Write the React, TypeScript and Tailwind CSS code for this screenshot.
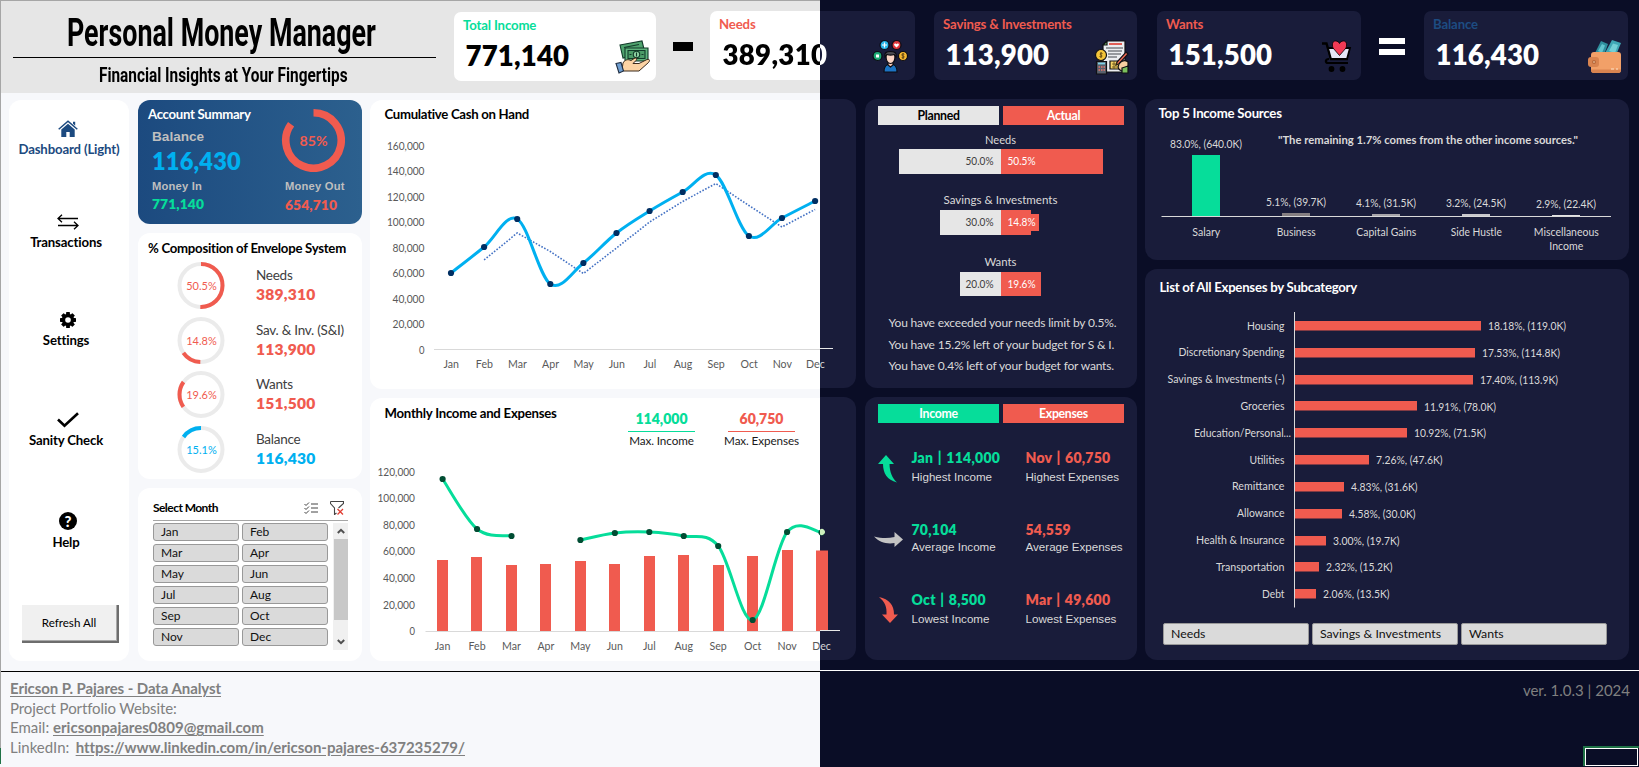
import React from 'react';

const MONTHS = ['Jan', 'Feb', 'Mar', 'Apr', 'May', 'Jun', 'Jul', 'Aug', 'Sep', 'Oct', 'Nov', 'Dec'];
const RED = '#f05b4f';
const GREEN = '#06dd9a';

type Pt = [number, number];

function smooth(pts: Pt[]) {
  let d = `M${pts[0][0]},${pts[0][1]}`;
  for (let i = 0; i < pts.length - 1; i++) {
    const a = pts[i - 1] ?? pts[i];
    const b = pts[i];
    const c = pts[i + 1];
    const e = pts[i + 2] ?? c;
    d += ` C${b[0] + (c[0] - a[0]) / 6},${b[1] + (c[1] - a[1]) / 6} ${c[0] - (e[0] - b[0]) / 6},${c[1] - (e[1] - b[1]) / 6} ${c[0]},${c[1]}`;
  }
  return d;
}

interface LabelProps {
  x: number;
  cy: number;
  w?: number;
  size?: number;
  fill?: string;
  bold?: boolean;
  anchor?: 'start' | 'middle' | 'end';
  children: string;
}

function Label({ x, cy, w, size = 10.6, fill = '#d9d9d9', bold, anchor = 'middle', children }: LabelProps) {
  return (
    <text
      x={x}
      y={cy + size * 0.36}
      fontSize={size}
      fontWeight={bold ? 700 : 400}
      fill={fill}
      textAnchor={anchor}
      textLength={w}
      lengthAdjust="spacingAndGlyphs"
    >
      {children}
    </text>
  );
}

/* ---------- icons ---------- */

function CashIcon() {
  return (
    <svg viewBox="0 0 36 34" className="h-[34px] w-9">
      <g stroke="#123b2a" strokeWidth="1.1">
        <path d="M5 5 27 1l3 12L8 18Z" fill="#4fa36e" />
        <path d="M9 7.500 24 4.500" fill="none" />
        <path d="M10 8h23v13H10Z" fill="#5fb37c" />
        <path d="M13 10.500h17v8H13Z" fill="#4c9c68" />
        <circle cx="21.500" cy="14.500" r="3.200" fill="#8ed0a2" />
        <path d="M21.500 12.500v4M14.500 14.500h2M26.500 14.500h2" fill="none" />
      </g>
      <path d="M8 23c2-3.500 5-4 8-2.500l4-2.500c2-.5 2 1.500 1 2.500l-3 3h6l8-4c3-.5 3 1 1.500 3L24 31H9l-2-1Z" fill="#fcd3a4" stroke="#3b2a1c" strokeWidth="1" />
      <path d="M1 23.500l5-1L8.500 31 4 33Z" fill="#6f9ed0" stroke="#1e2c40" strokeWidth="1.100" />
    </svg>
  );
}

function NeedsIcon() {
  return (
    <svg viewBox="0 0 36 34" className="h-[34px] w-9">
      <g stroke="#0b0b12" strokeWidth="1.200">
        <circle cx="12.500" cy="6" r="4.500" fill="#29b6e8" />
        <circle cx="24.500" cy="6" r="4.500" fill="#e0383c" />
        <circle cx="5.500" cy="17" r="4.500" fill="#19a974" />
        <circle cx="31" cy="17" r="4.500" fill="#f4b731" />
        <path d="M12 33c0-6 2-8 6.500-8s6.500 2 6.500 8Z" fill="#1c74c4" />
        <path d="M16 22h5v4l-2.500 2-2.500-2Z" fill="#f3c3b2" />
        <path d="M14 17c0 5 2 7.500 4.500 7.500S23 22 23 17v-2h-9Z" fill="#fbd5c5" />
        <path d="M13 18c-1-4 1-5.500 5.500-5.500S25 14 24 18c-1-1-1.500-2-2-2.500-2 .7-5 .7-7 0-.7.500-1 1.500-2 2.500Z" fill="#4a4a50" />
      </g>
      <path d="M12.500 3.500v5M10 6h5" stroke="#fff" strokeWidth="1.200" />
      <path d="M24.500 8.500 22 6c0-2 2-2 2.500-.8.5-1.200 2.500-1.200 2.500.8Z" fill="#fff" />
      <rect x="4" y="15.500" width="3" height="3" fill="#fff" />
      <path d="M32.300 15.300c-1.500-1-2.800 0-2.300 1s2 .6 2.200 1.500-1.200 1.500-2.500.7M31 14v6" stroke="#4c3510" strokeWidth=".9" fill="none" />
    </svg>
  );
}

function SavingsIcon() {
  return (
    <svg viewBox="0 0 36 36" className="h-9 w-9">
      <g stroke="#101014" strokeWidth="1.200">
        <path d="M9 6l4-4h18v31H9Z" fill="#eceef0" />
        <path d="M9 6l4-4v4Z" fill="#79c36b" />
        <path d="M16 22h12v8H16Z" fill="#f6d365" />
        <circle cx="7" cy="16" r="5.500" fill="#f4c53a" />
        <path d="M2.500 22.500h10V35h-10Z" fill="#59616d" />
        <path d="M32 13l2 2-9 10-3 1 1-3Z" fill="#ef6a55" />
        <path d="M25 25c3-4 6-4 9-2v7l-6 2c-3-1-5-3-3-7Z" fill="#f8cfa0" />
        <path d="M28 29l6-2v7h-6Z" fill="#7bc05d" />
      </g>
      <path d="M15 5h13" stroke="#e04f44" strokeWidth="1.800" />
      <path d="M12 9h17M14 12h14M14 15h13M14 18h9" stroke="#42464d" strokeWidth="1" />
      <path d="M7 13v6M8.500 14.500c-2-1-3.500.8-1.500 1.500s1 2.500-1.500 1.500" stroke="#5b4211" strokeWidth=".9" fill="none" />
      <path d="M4 24.500h7" stroke="#7fd3e6" strokeWidth="1.800" />
      <path d="M4.500 28h1.500M7 28h1.500M9.500 28H11M4.500 31h1.500M7 31h1.500M9.500 31H11" stroke="#e9776c" strokeWidth="1.500" />
      <path d="M18 25h7M18 28h6M20 22v8" stroke="#5c4a16" strokeWidth=".8" />
    </svg>
  );
}

function CartIcon() {
  return (
    <svg viewBox="0 0 30 34" className="h-[34px] w-[30px]">
      <path d="M0 4.500h4.500L9 20h17" stroke="#000" strokeWidth="2.400" fill="none" />
      <path d="M6 9h22l-3 11H9Z" fill="#e4e6f6" stroke="#000" strokeWidth="1.800" />
      <path d="M17.500 16.500 11 9c-1.500-4.500 0-7 2.500-7 2 0 3.300 1 4 2.500C18.200 3 19.500 2 21.500 2c2.500 0 4 2.500 2.500 7Z" fill="#f23a55" stroke="#000" strokeWidth=".8" />
      <path d="M26 24H6c-3 0-3-4 1-4" fill="none" stroke="#000" strokeWidth="2.200" />
      <circle cx="9.500" cy="30" r="2.900" />
      <circle cx="20.500" cy="30" r="2.900" />
    </svg>
  );
}

function WalletIcon() {
  return (
    <svg viewBox="0 0 36 35" className="h-[35px] w-9">
      <path d="m8 14 6-12 7 3-4 11Z" fill="#2f8f9e" />
      <path d="m18 14 7-13 9 3-5 12Z" fill="#3fa7b5" />
      <path d="m11 12 4-7 3 1.500L15 14Z" fill="#63c4cd" />
      <path d="m22 12 4-7.500 5 1.500-3 8Z" fill="#73cfd6" />
      <rect x="4" y="13" width="30" height="21" rx="3" fill="#f2a068" />
      <path d="M4 30.500h30v.5a3 3 0 0 1-3 3H7a3 3 0 0 1-3-3Z" fill="#d98450" />
      <rect x="1" y="18" width="11" height="10" rx="3" fill="#d98450" />
      <circle cx="7" cy="23" r="2" fill="#b8683a" />
      <circle cx="7" cy="23" r=".8" fill="#f7d9b8" />
      <path d="M24 30h3M29 30h2" stroke="#fde3c8" strokeWidth="1" />
    </svg>
  );
}

function HomeIcon() {
  return (
    <svg viewBox="0 0 20 17" className="h-[17px] w-5" fill="#1c4a80">
      <path d="M15 1.800h2.200v4L15 3.800Z" />
      <path d="m.7 9.300 9.300-8 9.300 8" fill="none" stroke="#1c4a80" strokeWidth="1.500" />
      <path d="M10 3.800 3.300 9.600V17h5v-5h3.400v5h5V9.600Z" />
    </svg>
  );
}

function SwapIcon() {
  return (
    <svg viewBox="0 0 22 16" className="h-4 w-[22px]" fill="none" stroke="#000" strokeWidth="1.300">
      <path d="M21 4.500H1M5 .8 1 4.500l4 3.700M1 11.500h20M17 7.800l4 3.700-4 3.700" />
    </svg>
  );
}

function GearIcon() {
  return (
    <svg viewBox="-8 -8 16 16" className="h-4 w-4">
      {[0, 45, 90, 135].map((a) => (
        <rect key={a} x="-1.900" y="-8" width="3.800" height="16" rx=".6" transform={`rotate(${a})`} />
      ))}
      <circle r="6.200" />
      <circle r="2.800" fill="#fff" />
    </svg>
  );
}

function CheckIcon() {
  return (
    <svg viewBox="0 0 22 16" className="h-4 w-[22px]" fill="none" stroke="#000" strokeWidth="2.600">
      <path d="m1 7.500 6.500 6.300L21 1.300" />
    </svg>
  );
}

function HelpIcon() {
  return (
    <span className="flex h-[18px] w-[18px] items-center justify-center rounded-full bg-black text-[15px] font-black leading-none text-white">
      ?
    </span>
  );
}

/* ---------- header ---------- */

interface StatProps {
  label: string;
  value: string;
  className: string;
  labelClass: string;
  valueClass: string;
  iconClass?: string;
  icon: React.ReactNode;
}

function Stat({ label, value, className, labelClass, valueClass, icon, iconClass = 'mr-[5px]' }: StatProps) {
  return (
    <div className={`relative flex h-[69px] shrink-0 justify-between rounded-[7px] pl-[9px] ${className}`}>
      <div className="relative flex flex-col">
        <span className={`mt-[4px] whitespace-nowrap text-[13.200px] font-bold leading-[18px] tracking-[-0.150px] ${labelClass}`}>{label}</span>
        <span className={`ml-[2.500px] mt-[4px] text-[27.600px] font-extrabold leading-[35px] tracking-[0.150px] ${valueClass}`}>{value}</span>
      </div>
      <div className={`relative mt-[28px] ${iconClass}`}>{icon}</div>
    </div>
  );
}

function Header() {
  return (
    <header className="flex h-[93px] items-start bg-[linear-gradient(90deg,#e6e6e6_820px,#0a0d26_820px)]">
      <div className="ml-[13px] mt-[11px] flex w-[423px] flex-col items-center font-['Roboto',sans-serif] font-bold text-black">
        <h1 className="flex h-[46px] w-full scale-x-[0.680] items-center justify-center whitespace-nowrap pb-[3px] pr-[9px] text-[39.500px] leading-[43px]">
          Personal Money Manager
        </h1>
        <div className="h-px w-full shrink-0 bg-black" />
        <p className="mt-[5px] scale-x-[0.750] whitespace-nowrap pr-[4px] text-[20.500px] leading-[24px]">
          Financial Insights at Your Fingertips
        </p>
      </div>
      <Stat label="Total Income" value="771,140" className="ml-[18px] mt-[12px] w-[202px] bg-white" labelClass="text-[#06dd9a]" valueClass="text-black" icon={<CashIcon />} />
      <div className="ml-[17px] mt-[42px] h-[9px] w-[20px] bg-black" />
      <Stat
        label="Needs"
        value="389,310"
        className="ml-[17px] mt-[11px] w-[205px] bg-[linear-gradient(90deg,#fff_110px,#191c3a_110px)]"
        labelClass="text-[#f05b4f]"
        valueClass="pl-[1px] bg-[linear-gradient(90deg,#000_98.500px,#fff_98.500px)] bg-clip-text text-transparent tracking-[0.300px]"
        iconClass="mr-[7px]"
        icon={<NeedsIcon />}
      />
      <Stat label="Savings & Investments" value="113,900" className="ml-[19px] mt-[11px] w-[203px] bg-[#191c3a]" labelClass="text-[#f05b4f]" valueClass="text-white" iconClass="mr-[7px]" icon={<SavingsIcon />} />
      <Stat label="Wants" value="151,500" className="ml-[20px] mt-[11px] w-[204px] bg-[#191c3a] pr-[4px]" labelClass="text-[#f05b4f]" valueClass="text-white" icon={<CartIcon />} />
      <div className="ml-[18px] mt-[38px] flex h-[17px] w-[26px] flex-col justify-between">
        <div className="h-[6px] bg-white" />
        <div className="h-[6px] bg-white" />
      </div>
      <Stat label="Balance" value="116,430" className="ml-[19px] mt-[11px] w-[204px] bg-[#191c3a]" labelClass="text-[#1d4c82]" valueClass="text-white" icon={<WalletIcon />} />
    </header>
  );
}

/* ---------- left columns ---------- */

function NavItem({ icon, label, className = '', labelClass = 'pr-[4px]' }: { icon: React.ReactNode; label: string; className?: string; labelClass?: string }) {
  return (
    <div className={`flex flex-col items-center ${className}`}>
      <div className="flex h-[18px] items-end">{icon}</div>
      <span className={`mt-[3px] whitespace-nowrap text-[13.200px] font-bold leading-[18px] tracking-[-0.150px] ${labelClass}`}>{label}</span>
    </div>
  );
}

function Sidebar() {
  return (
    <nav className="flex h-[561px] w-[120px] flex-col items-center rounded-[12px] bg-white pr-[2px] text-black">
      <NavItem icon={<HomeIcon />} label="Dashboard (Light)" className="mt-[19px] text-[#1c4a80]" labelClass="pl-[2px]" />
      <NavItem icon={<SwapIcon />} label="Transactions" className="mt-[54px]" />
      <NavItem icon={<GearIcon />} label="Settings" className="mt-[59px]" />
      <NavItem icon={<CheckIcon />} label="Sanity Check" className="mt-[61px]" />
      <NavItem icon={<HelpIcon />} label="Help" className="mt-[63px]" />
      <button className="ml-[4px] mt-[54px] h-[38px] w-[97px] border-b-2 border-r-2 border-[#6d6d6d] bg-[#f0f0f0] text-[11.600px] shadow-[inset_-1px_-1px_0_#a8a8a8]">
        Refresh All
      </button>
    </nav>
  );
}

function arc(cx: number, cy: number, r: number, from: number, to: number) {
  const p = (f: number) => {
    const t = f * 2 * Math.PI;
    return `${cx + r * Math.sin(t)},${cy - r * Math.cos(t)}`;
  };
  return `M${p(from)} A${r},${r} 0 ${to - from > 0.5 ? 1 : 0} 1 ${p(to)}`;
}

function AccountSummary() {
  return (
    <section className="flex h-[124px] w-[224px] justify-between rounded-[12px] bg-[linear-gradient(90deg,#1c4a7f,#2c608e)]">
      <div className="flex flex-col pl-[14px]">
        <h2 className="-ml-[4px] mt-[5px] whitespace-nowrap text-[13.200px] font-bold leading-[18px] tracking-[-0.300px] text-white">Account Summary</h2>
        <span className="mt-[6px] font-['Liberation_Sans',sans-serif] text-[13.600px] font-bold leading-[16px] text-[#bfbfbf]">Balance</span>
        <span className="mt-[2px] text-[23.600px] font-extrabold leading-[28px] tracking-[0.150px] text-[#00b0f0]">116,430</span>
        <span className="mt-[4px] font-['Liberation_Sans',sans-serif] text-[11.200px] font-bold leading-[14px] tracking-[0.200px] text-[#bfbfbf]">Money In</span>
        <span className="mt-[3px] text-[13.800px] font-extrabold leading-[16px] tracking-[0.100px] text-[#06dd9a]">771,140</span>
      </div>
      <div className="mr-[16px] mt-[8px] flex w-[61px] flex-col">
        <svg viewBox="0 0 64 64" className="-ml-[4px] h-16 w-16 shrink-0">
          <path d={arc(32.5, 32.5, 27.7, 0, 0.85)} fill="none" stroke={RED} strokeWidth="7.600" />
          <Label x={32.500} cy={32.700} w={28} size={14} bold fill={RED}>85%</Label>
        </svg>
        <span className="mt-[7px] whitespace-nowrap font-['Liberation_Sans',sans-serif] text-[11.200px] font-bold leading-[14px] tracking-[0.200px] text-[#bfbfbf]">Money Out</span>
        <span className="mt-[4px] text-[13.800px] font-extrabold leading-[16px] tracking-[0.100px] text-[#f05b4f]">654,710</span>
      </div>
    </section>
  );
}

const ENVELOPES = [
  { name: 'Needs', value: '389,310', pct: '50.5%', from: 0, to: 0.505, color: RED, cls: 'text-[#f05b4f]' },
  { name: 'Sav. & Inv. (S&I)', value: '113,900', pct: '14.8%', from: 0.505, to: 0.653, color: RED, cls: 'text-[#f05b4f]' },
  { name: 'Wants', value: '151,500', pct: '19.6%', from: 0.653, to: 0.849, color: RED, cls: 'text-[#f05b4f]' },
  { name: 'Balance', value: '116,430', pct: '15.1%', from: 0.849, to: 1, color: '#00b0f0', cls: 'text-[#00b0f0]' },
];

function Composition() {
  return (
    <section className="mt-[9px] flex h-[246px] w-[224px] flex-col rounded-[12px] bg-white">
      <h2 className="ml-[10px] mt-[6px] whitespace-nowrap text-[13.200px] font-bold leading-[18px] tracking-[-0.270px] text-black">% Composition of Envelope System</h2>
      <div className="mt-[1px] flex flex-col">
        {ENVELOPES.map((e) => (
          <div key={e.name} className="flex h-[54.500px] items-center">
            <svg viewBox="0 0 48 48" className="ml-[38.500px] h-12 w-12">
              <circle cx="24" cy="24.500" r="21.500" fill="none" stroke="#ebebeb" strokeWidth="4" />
              <path d={arc(24, 24.5, 21.5, e.from, e.to)} fill="none" stroke={e.color} strokeWidth="4" />
              <Label x={24.500} cy={24.500} w={30.500} size={12} fill={e.color}>{e.pct}</Label>
            </svg>
            <div className="ml-[31.500px] flex flex-col">
              <span className="whitespace-nowrap text-[13.500px] leading-[18px] tracking-[-0.250px] text-[#404040]">{e.name}</span>
              <span className={`mt-[1px] text-[15.600px] font-extrabold leading-[19px] tracking-[0.200px] ${e.cls}`}>{e.value}</span>
            </div>
          </div>
        ))}
      </div>
    </section>
  );
}

function MonthSlicer() {
  return (
    <section className="mt-[9px] flex h-[173px] w-[224px] flex-col rounded-[12px] bg-white px-[14px] pl-[15px]">
      <div className="mt-[10px] flex h-[23px] items-center justify-between border-b border-[#a6a6a6] pb-[2px]">
        <h2 className="text-[12px] font-bold tracking-[-0.550px] text-black">Select Month</h2>
        <div className="flex items-center gap-[12px] pr-[4px]">
          <svg viewBox="0 0 14 12" className="h-3 w-[14px]" fill="none" stroke="#444" strokeWidth="1">
            <path d="m.5 2 1.500 1.500L5 .5M.5 6 2 7.500l3-3M.5 10 2 11.500l3-3M7 2h7M7 6h7M7 10h7" />
          </svg>
          <svg viewBox="0 0 14 14" className="h-[14px] w-[14px]" fill="none" stroke="#444" strokeWidth="1.100">
            <path d="M.5.500h13v2L8.500 7M.5.500v2l4 4.500v6.500l2-1.500" />
            <path d="m7.500 8 5.500 5.500M13 8l-5.500 5.500" stroke="#e03c31" strokeWidth="1.300" />
          </svg>
        </div>
      </div>
      <div className="mt-[2px] flex items-start justify-between">
        <div className="grid grid-cols-2 gap-[3px]">
          {MONTHS.map((m) => (
            <button key={m} className="flex h-[18px] w-[86px] items-center rounded-[3px] border border-[#999] bg-[#dadada] pl-[7px] text-[12px] leading-none text-[#111]">
              {m}
            </button>
          ))}
        </div>
        <div className="flex h-[127px] w-[15px] flex-col items-center bg-[#f0f0f0] pb-[5px] pt-[5px]">
          <svg viewBox="0 0 8 6" className="h-[6px] w-2 shrink-0" fill="none" stroke="#505050" strokeWidth="2">
            <path d="m.8 5 3.200-3.200L7.200 5" />
          </svg>
          <div className="mt-[5px] h-[81px] w-[14px] shrink-0 bg-[#c8c8c8]" />
          <svg viewBox="0 0 8 6" className="mt-auto h-[6px] w-2 shrink-0" fill="none" stroke="#505050" strokeWidth="2">
            <path d="m.8 1 3.200 3.200L7.200 1" />
          </svg>
        </div>
      </div>
    </section>
  );
}

/* ---------- middle charts ---------- */

function SplitCard({ heightClass, children }: { heightClass: string; children: React.ReactNode }) {
  return (
    <section className={`relative flex w-[486px] flex-col ${heightClass}`}>
      <div className="absolute inset-y-0 left-0 w-[450px] rounded-l-[12px] bg-white" />
      <div className="absolute -top-px bottom-px right-0 w-[36px] rounded-r-[12px] bg-[#191c3a]" />
      <div className="relative flex flex-col">{children}</div>
    </section>
  );
}

function SplitFill({ id }: { id: string }) {
  return (
    <defs>
      <linearGradient id={id} gradientUnits="userSpaceOnUse" x1="819.900" x2="820.100" y1="0" y2="0">
        <stop offset="0" stopColor="#595959" />
        <stop offset="1" stopColor="#d9d9d9" />
      </linearGradient>
    </defs>
  );
}

const CASH = [273, 247, 219, 284, 263, 233, 211, 192, 175, 236, 218, 201];

function CashChart() {
  const pts: Pt[] = CASH.map((y, i) => [451 + i * 33.1, y]);
  const avg = pts.slice(1).map(([x, y], i) => `${x},${(y + CASH[i]) / 2}`).join(' ');
  const ticks = ['160,000', '140,000', '120,000', '100,000', '80,000', '60,000', '40,000', '20,000', '0'];
  return (
    <SplitCard heightClass="h-[289px]">
      <h2 className="ml-[14.500px] mt-[5px] text-[13.200px] font-bold leading-[18px] tracking-[-0.300px] text-black">Cumulative Cash on Hand</h2>
      <svg viewBox="370 123 486 265" className="h-[265px] w-[486px]">
        <SplitFill id="cash-split" />
        {ticks.map((t, i) => (
          <Label key={t} x={424.500} cy={145.800 + i * 25.500} anchor="end" fill="#595959" w={t.length === 7 ? 37.500 : t.length === 6 ? 32 : 5.500}>{t}</Label>
        ))}
        <path d="M434 349.500H820" stroke="#d9d9d9" />
        <path d="M820 348.500H833" stroke="#e8e8e8" />
        <polyline points={avg} fill="none" stroke="#4472c4" strokeWidth="1.600" strokeDasharray="1.600 1.600" />
        <path d={smooth(pts)} fill="none" stroke="#00b0f0" strokeWidth="3" />
        {pts.map(([x, y]) => <circle key={x} cx={x} cy={y} r="3.100" fill="#002e62" />)}
        {MONTHS.map((m, i) => (
          <Label key={m} x={451.300 + i * 33.100} cy={364.500} fill={i === 11 ? 'url(#cash-split)' : '#595959'}>{m}</Label>
        ))}
      </svg>
    </SplitCard>
  );
}

const EXPENSE_TOPS = [560, 557, 565, 564, 561, 564, 556, 555, 565, 556, 550, 550.5];
const INCOME_Y = [479, 529, 536, null, 540, 533, 532, 536, 546, 620, 532, 532.5];

function MonthlyChart() {
  const cx = (i: number) => 442.6 + i * 34.45;
  const pts = INCOME_Y.map((y, i) => (y === null ? null : ([cx(i), y] as Pt)));
  const ticks = ['120,000', '100,000', '80,000', '60,000', '40,000', '20,000', '0'];
  return (
    <SplitCard heightClass="mt-[9px] h-[263px]">
      <div className="flex h-[60px]">
        <h2 className="ml-[14.500px] mt-[5.500px] w-[235px] whitespace-nowrap text-[13.200px] font-bold leading-[18px] tracking-[-0.250px] text-black">Monthly Income and Expenses</h2>
        <div className="mt-[12px] flex w-[84px] flex-col items-center">
          <span className="text-[14px] font-extrabold leading-[18px] text-[#06dd9a]">114,000</span>
          <div className="mt-[3px] h-px w-[67px] bg-[#06dd9a]" />
          <span className="mt-[1px] whitespace-nowrap text-[11.700px] leading-[15px] tracking-[-0.100px] text-[#1a1a1a]">Max. Income</span>
        </div>
        <div className="ml-[16px] mt-[12px] flex w-[84px] flex-col items-center">
          <span className="text-[14px] font-extrabold leading-[18px] text-[#f05b4f]">60,750</span>
          <div className="mt-[3px] h-px w-[67px] bg-[#f05b4f]" />
          <span className="mt-[1px] whitespace-nowrap text-[11.700px] leading-[15px] tracking-[-0.100px] text-[#1a1a1a]">Max. Expenses</span>
        </div>
      </div>
      <svg viewBox="370 458 486 200" className="h-[200px] w-[486px]">
        <SplitFill id="monthly-split" />
        {ticks.map((t, i) => (
          <Label key={t} x={415} cy={471.800 + i * 26.600} anchor="end" fill="#595959" w={t.length === 7 ? 37.500 : t.length === 6 ? 32 : 5.500}>{t}</Label>
        ))}
        {EXPENSE_TOPS.map((y, i) => <rect key={i} x={Math.round(cx(i) - 5.6)} y={y} width={i === 11 ? 12 : 11} height={631 - y} fill={RED} />)}
        <path d="M425.500 631.500H820" stroke="#d9d9d9" />
        <path d="M820 630.500H840" stroke="#e8e8e8" />
        <path d={smooth(pts.slice(0, 3) as Pt[])} fill="none" stroke={GREEN} strokeWidth="3" />
        <path d={smooth(pts.slice(4) as Pt[])} fill="none" stroke={GREEN} strokeWidth="3" />
        {pts.map((p, i) => p && <circle key={i} cx={p[0]} cy={p[1]} r="3.100" fill="#004d33" />)}
        <path d="M820 529.500a3.100 3.100 0 1 1 0 5Z" fill="#cdf0bd" />
        {MONTHS.map((m, i) => (
          <Label key={m} x={cx(i)} cy={646.500} fill={i === 11 ? 'url(#monthly-split)' : '#595959'}>{m}</Label>
        ))}
      </svg>
    </SplitCard>
  );
}

/* ---------- planned / actual ---------- */

function PairHeader({ left, right, leftClass }: { left: string; right: string; leftClass: string }) {
  return (
    <div className="flex gap-[4px] pl-[13px] pt-[7px] text-[12.300px] font-bold leading-[19px] tracking-[-0.300px]">
      <div className={`h-[19px] w-[121px] text-center ${leftClass}`}>{left}</div>
      <div className="h-[19px] w-[121px] bg-[#f05b4f] text-center text-white">{right}</div>
    </div>
  );
}

const BUDGETS = [
  { name: 'Needs', w: 31, cy: 140, y: 149, h: 25, plan: '50.0%', planW: 102, actual: '50.5%', actualW: 102 },
  { name: 'Savings & Investments', w: 114, cy: 199.2, y: 210, h: 25, plan: '30.0%', planW: 61, actual: '14.8%', actualW: 30 },
  { name: 'Wants', w: 32, cy: 262, y: 272, h: 24, plan: '20.0%', planW: 41, actual: '19.6%', actualW: 40 },
];

function PlannedActual() {
  return (
    <section className="-mt-px flex h-[289px] w-[272px] flex-col rounded-[12px] bg-[#191c3a]">
      <PairHeader left="Planned" right="Actual" leftClass="bg-[#e6e6e6] text-black" />
      <svg viewBox="865 125 272 180" className="h-[180px] w-[272px]">
        {BUDGETS.map((b) => (
          <g key={b.name}>
            <Label x={1000.500} cy={b.cy} w={b.w} size={12}>{b.name}</Label>
            <rect x={1001 - b.planW} y={b.y} width={b.planW} height={b.h} fill="#e6e6e6" />
            <rect x={1001} y={b.y} width={b.actualW} height={b.h} fill={RED} />
            {b.actualW < 38 && <rect x={1001} y={b.y + 4} width={38} height={17} fill={RED} />}
            <Label x={993.500} cy={b.y + 12.500} w={28} anchor="end" fill="#404040">{b.plan}</Label>
            <Label x={1007.500} cy={b.y + 12.500} w={28} anchor="start" fill="#ffffff">{b.actual}</Label>
          </g>
        ))}
      </svg>
      <div className="ml-[23.500px] mt-[7px] flex flex-col whitespace-nowrap text-[12px] leading-[21.500px] tracking-[-0.170px] text-[#d9d9d9]">
        <p>You have exceeded your needs limit by 0.5%.</p>
        <p>You have 15.2% left of your budget for S &amp; I.</p>
        <p>You have 0.4% left of your budget for wants.</p>
      </div>
    </section>
  );
}

const EXTREMES = [
  {
    income: 'Jan | 114,000', expense: 'Nov | 60,750', kind: 'Highest', color: GREEN,
    d: 'M12 1 20 10h-4.500c.3 8 2.500 14 7.500 18.500C13 26 9 19 9 10H4Z', cls: 'mt-[15.500px]', gap: 'leading-[19.500px]',
  },
  {
    income: '70,104', expense: '54,559', kind: 'Average', color: '#c3c3c3',
    d: 'M0 12.500c8 2 14 2 20.500.500V8l8.500 7.500-8.500 7.500v-4C13 20.500 5 18 0 12.500Z', cls: 'mt-[13.500px]', gap: 'leading-[17px]',
  },
  {
    income: 'Oct | 8,500', expense: 'Mar | 49,600', kind: 'Lowest', color: RED,
    d: 'M5 2c10 2 15 8 15 17.500h4L16 28 8 19.500h4.500C13 12 11 7 5 2Z', cls: 'mt-[14px]', gap: 'leading-[19px]',
  },
];

function Extremes() {
  return (
    <section className="mt-[9px] flex h-[263px] w-[272px] flex-col rounded-[12px] bg-[#191c3a]">
      <PairHeader left="Income" right="Expenses" leftClass="bg-[#06dd9a] text-white" />
      {EXTREMES.map((e) => (
        <div key={e.kind} className={`flex h-[57px] items-center whitespace-nowrap ${e.cls}`}>
          <svg viewBox="0 0 30 30" className="ml-[9px] mt-[3px] h-[30px] w-[30px]">
            <path d={e.d} fill={e.color} />
          </svg>
          <div className={`ml-[7.500px] flex w-[114px] flex-col ${e.gap}`}>
            <span className="text-[14px] font-extrabold tracking-[0.250px] [word-spacing:1px] text-[#06dd9a]">{e.income}</span>
            <span className="font-['Liberation_Sans',sans-serif] text-[11.600px] text-[#d9d9d9]">{e.kind} Income</span>
          </div>
          <div className={`flex flex-col ${e.gap}`}>
            <span className="text-[14px] font-extrabold tracking-[0.250px] [word-spacing:1px] text-[#f05b4f]">{e.expense}</span>
            <span className="font-['Liberation_Sans',sans-serif] text-[11.600px] text-[#d9d9d9]">{e.kind} Expenses</span>
          </div>
        </div>
      ))}
    </section>
  );
}

/* ---------- right column ---------- */

const SOURCES = [
  { lines: ['Salary'], ws: [28], value: '83.0%, (640.0K)', w: 72, top: 155, cy: 143.7, color: GREEN },
  { lines: ['Business'], ws: [39], value: '5.1%, (39.7K)', w: 60, top: 213, cy: 202, color: '#857f82' },
  { lines: ['Capital Gains'], ws: [60], value: '4.1%, (31.5K)', w: 60, top: 214, cy: 203, color: '#a8a6aa' },
  { lines: ['Side Hustle'], ws: [51], value: '3.2%, (24.5K)', w: 60, top: 214, cy: 203, color: '#c9c8cc' },
  { lines: ['Miscellaneous', 'Income'], ws: [65, 34], value: '2.9%, (22.4K)', w: 60, top: 215, cy: 204, color: '#e3e3e3' },
];

function IncomeSources() {
  return (
    <section className="-mt-px flex h-[161px] w-[484px] flex-col rounded-[12px] bg-[#191c3a]">
      <h2 className="ml-[13.500px] mt-[5px] text-[13.200px] font-bold leading-[18px] tracking-[-0.230px] text-white">Top 5 Income Sources</h2>
      <svg viewBox="1145 122 484 138" className="h-[138px] w-[484px]">
        <Label x={1428} cy={139.800} w={300} size={11.800} bold>"The remaining 1.7% comes from the other income sources."</Label>
        {SOURCES.map((s, i) => (
          <g key={s.value}>
            <rect x={1192 + i * 90} y={s.top} width={28} height={216 - s.top} fill={s.color} />
            <Label x={1206 + i * 90} cy={s.cy} w={s.w}>{s.value}</Label>
            {s.lines.map((l, j) => (
              <Label key={l} x={1206.300 + i * 90} cy={232 + j * 14} w={s.ws[j]}>{l}</Label>
            ))}
          </g>
        ))}
        <path d="M1161.500 216.500H1611" stroke="#d9d9d9" />
      </svg>
    </section>
  );
}

const EXPENSES = [
  { name: 'Housing', nw: 37.5, end: 1481, value: '18.18%, (119.0K)', w: 78 },
  { name: 'Discretionary Spending', nw: 106, end: 1475, value: '17.53%, (114.8K)', w: 78 },
  { name: 'Savings & Investments (-)', nw: 117, end: 1473, value: '17.40%, (113.9K)', w: 78 },
  { name: 'Groceries', nw: 44, end: 1417, value: '11.91%, (78.0K)', w: 72 },
  { name: 'Education/Personal...', nw: 97, end: 1407, value: '10.92%, (71.5K)', w: 72 },
  { name: 'Utilities', nw: 35, end: 1369, value: '7.26%, (47.6K)', w: 66.5 },
  { name: 'Remittance', nw: 52.5, end: 1344, value: '4.83%, (31.6K)', w: 66.5 },
  { name: 'Allowance', nw: 47.5, end: 1342, value: '4.58%, (30.0K)', w: 66.5 },
  { name: 'Health & Insurance', nw: 88.5, end: 1326, value: '3.00%, (19.7K)', w: 66.5 },
  { name: 'Transportation', nw: 68.5, end: 1319, value: '2.32%, (15.2K)', w: 66.5 },
  { name: 'Debt', nw: 22.5, end: 1316, value: '2.06%, (13.5K)', w: 66.5 },
];

function ExpenseList() {
  return (
    <section className="mt-[9px] flex h-[391px] w-[484px] flex-col rounded-[12px] bg-[#191c3a]">
      <h2 className="ml-[14.500px] mt-[9px] text-[13.200px] font-bold leading-[18px] tracking-[-0.250px] text-white">List of All Expenses by Subcategory</h2>
      <svg viewBox="1145 296 484 327" className="h-[327px] w-[484px]">
        {EXPENSES.map((e, i) => (
          <g key={e.name}>
            <Label x={i === 4 ? 1291 : 1284.500} cy={325.700 + i * 26.800} w={e.nw} anchor="end">{e.name}</Label>
            <rect x={1295} y={Math.round(321 + i * 26.82)} width={e.end - 1295} height={9.500} fill={RED} />
            <Label x={e.end + 7} cy={326.300 + i * 26.800} w={e.w} anchor="start">{e.value}</Label>
          </g>
        ))}
        <path d="M1294.500 312V607.500" stroke="#d9d9d9" />
      </svg>
      <div className="ml-[18px] flex gap-[3px]">
        {['Needs', 'Savings & Investments', 'Wants'].map((t) => (
          <button key={t} className="flex h-[22px] w-[146px] items-center rounded-[2px] border border-[#999] bg-[#dadada] pl-[7px] text-[12.300px] text-[#111]">
            {t}
          </button>
        ))}
      </div>
    </section>
  );
}

/* ---------- footer ---------- */

function Footer() {
  return (
    <footer className="relative flex flex-1 justify-between text-[15px] leading-[19.500px] text-[#808080]">
      <div className="absolute left-0 top-[10px] h-px w-[820px] bg-black" />
      <div className="absolute left-[820px] right-0 top-[9px] h-px bg-white" />
      <div className="flex flex-col whitespace-nowrap pl-[10px] pt-[18px]">
        <p><a className="font-bold tracking-[-0.080px] underline underline-offset-2">Ericson P. Pajares - Data Analyst</a></p>
        <p className="tracking-[-0.100px]">Project Portfolio Website:</p>
        <p>Email: <a className="font-bold underline underline-offset-2">ericsonpajares0809@gmail.com</a></p>
        <p>LinkedIn: <a className="ml-[2.500px] font-bold tracking-[-0.020px] underline underline-offset-2">https://www.linkedin.com/in/ericson-pajares-637235279/</a></p>
      </div>
      <p className="whitespace-nowrap pr-[9px] pt-[20px]">ver. 1.0.3 | 2024</p>
      <div className="absolute bottom-[1px] right-0 h-[20px] w-[56px] border-2 border-b-0 border-r-0 border-[#1f7246]">
        <div className="h-full w-[53px] border border-white" />
      </div>
      <div className="absolute bottom-[3px] left-0 h-[16px] w-px bg-[#1f7246]" />
    </footer>
  );
}

export default function App() {
  return (
    <div className="relative flex h-[767px] w-[1639px] flex-col overflow-hidden bg-[linear-gradient(90deg,#f7f8fb_820px,#0a0d26_820px)] font-['Lato',sans-serif]">
      <Header />
      <main className="flex h-[568px] pl-[9px] pt-[7px]">
        <Sidebar />
        <div className="ml-[9px] flex flex-col">
          <AccountSummary />
          <Composition />
          <MonthSlicer />
        </div>
        <div className="ml-[8px] flex flex-col">
          <CashChart />
          <MonthlyChart />
        </div>
        <div className="ml-[9px] flex flex-col">
          <PlannedActual />
          <Extremes />
        </div>
        <div className="ml-[8px] flex flex-col">
          <IncomeSources />
          <ExpenseList />
        </div>
      </main>
      <Footer />
      <div className="absolute left-0 top-0 h-px w-[820px] bg-[#a6a6a6]" />
      <div className="absolute left-0 top-0 h-[748px] w-px bg-[#a6a6a6]" />
    </div>
  );
}
